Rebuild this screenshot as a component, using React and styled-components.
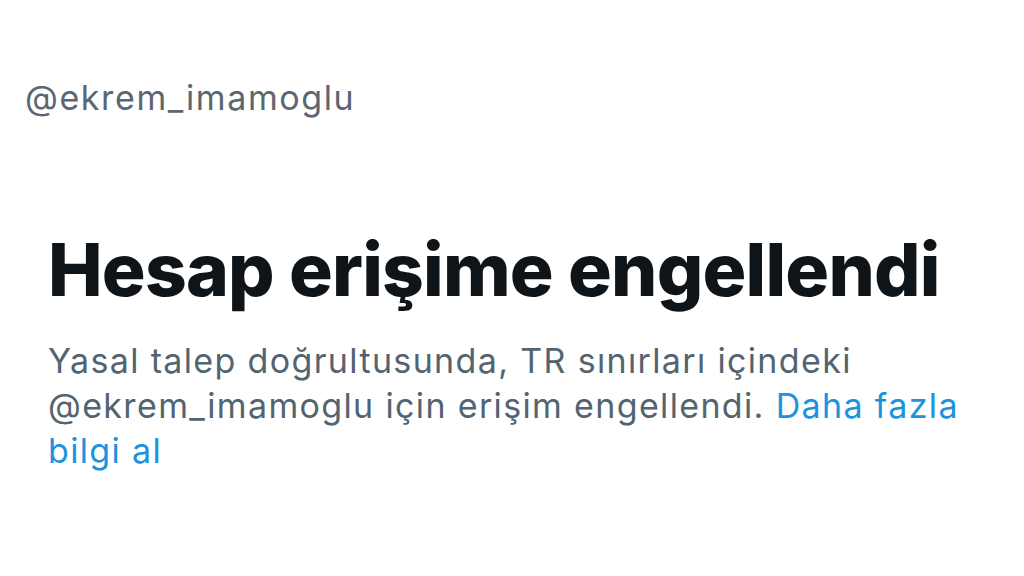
import React from "react";
import styled, { createGlobalStyle } from "styled-components";

const GlobalStyle = createGlobalStyle`
  html, body {
    margin: 0;
    padding: 0;
    background: #ffffff;
  }
  body {
    font-family: Inter, "Noto Sans", "Liberation Sans", sans-serif;
  }
`;

const Page = styled.div`
  width: 1024px;
  height: 576px;
  box-sizing: border-box;
  display: flex;
  flex-direction: column;
  padding-top: 78px;
  background: #ffffff;
  overflow: hidden;
`;

const Handle = styled.div`
  padding-left: 25px;
  font-size: 34px;
  line-height: 40px;
  color: #5b6670;
  letter-spacing: 1.6px;
`;

const Body = styled.div`
  display: flex;
  flex-direction: column;
  gap: 28px;
  padding: 112px 0 0 48px;
`;

const Title = styled.h1`
  margin: 0;
  font-size: 73px;
  line-height: 80px;
  font-weight: 800;
  color: #0f1419;
  letter-spacing: -0.8px;
`;

const Message = styled.p`
  margin: 0;
  font-size: 34px;
  line-height: 45px;
  color: #536471;
  letter-spacing: 1.35px;
  max-width: 940px;
`;

const Link = styled.a`
  color: #1d93e0;
  text-decoration: none;
`;

function App() {
  return (
    <Page>
      <GlobalStyle />
      <Handle>@ekrem_imamoglu</Handle>
      <Body>
        <Title>Hesap erişime engellendi</Title>
        <Message>
          Yasal talep doğrultusunda, TR sınırları içindeki
          <br />
          @ekrem_imamoglu için erişim engellendi.{" "}
          <Link href="#">
            Daha fazla
            <br />
            bilgi al
          </Link>
        </Message>
      </Body>
    </Page>
  );
}

export default App;
